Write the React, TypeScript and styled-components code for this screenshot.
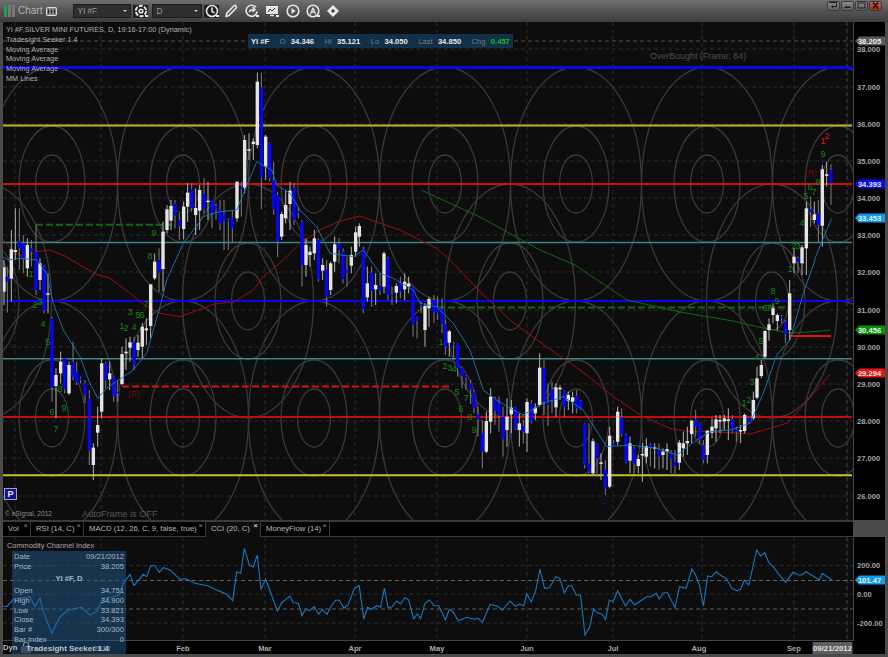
import React from "react";
import styled, { createGlobalStyle } from "styled-components";

const Global = createGlobalStyle`
  html, body { margin: 0; padding: 0; background: #3a3a3a; }
  body { font-family: "Liberation Sans", Arial, sans-serif; overflow: hidden; }
`;

/* ---------- chart data, read off the picture ---------- */
type Candle = { x: number; wt: number; bt: number; bb: number; wb: number; up: boolean };
const table = (ox: number, oy: number, s: string): Candle[] =>
  s.trim().split(/\s*;\s*/).filter(Boolean).map((row) => {
    const [a, b, c, d, e, k] = row.split(/\s+/);
    return {
      x: ox + +a / 3, wt: oy + +b / 3, bt: oy + +c / 3, bb: oy + +d / 3, wb: oy + +e / 3, up: k === "w",
    };
  });

const candles: Candle[] = [
  ...table(0, 180, `12 240 262 335 375 w;22 260 290 305 398 b;34 150 208 296 365 w;46 85 210 216 240 w;58 85 185 205 270 b;
70 165 190 237 280 b;82 175 195 265 290 w;94 180 205 215 260 b;108 135 215 330 345 b;120 235 250 300 330 w;132 255 258 392 400 b;
144 280 340 344 400 w;156 410 415 622 665 b;168 565 585 618 715 w;182 515 545 580 610 w;194 535 535 628 640 b;207 545 555 640 645 w;
219 485 545 590 600 b;230 545 575 608 615 b;242 590 595 600 610 b;255 600 610 645 670 b;268 630 655 812 855 b;280 790 803 855 900 w;
293 680 735 758 800 w;305 535 550 695 715 w;317 545 550 602 625 b;329 545 580 598 630 w;341 590 592 648 665 b;353 600 635 640 665 b;
366 500 522 612 615 w;378 475 515 520 570 w;390 470 487 503 545 w;402 470 487 555 570 b;414 465 488 510 530 w;427 430 440 500 535 w;
439 415 445 451 495 w;452 313 313 438 475 w;464 220 245 295 300 w;477 205 240 278 335 b`),
  ...table(120, 150, `129 215 245 357 425 w;141 165 178 240 250 w;153 150 168 212 240 w;165 150 160 197 235 b;178 190 210 227 270 b;
191 155 170 237 268 w;203 100 128 170 215 w;215 100 118 174 185 b;227 115 174 195 255 w;239 105 120 182 240 w;252 85 132 178 190 b;
264 95 152 156 210 w;276 150 150 190 235 b;288 160 168 178 210 b;300 150 180 220 240 b;312 150 192 212 300 b;325 205 210 215 300 b;
337 180 203 235 280 b;351 95 95 205 215 w;364 95 110 117 200 b`),
  ...table(220, 60, `74 225 240 383 400 w;87 220 268 272 300 w;100 235 245 252 300 w;112 38 65 255 265 w;124 38 82 352 448 b;137 225 230 320 360 w;
149 248 250 355 365 b;161 305 360 448 465 b;173 395 405 545 592 b;185 455 462 530 540 w;197 390 435 475 490 w;210 365 392 432 510 w;
222 370 383 480 495 b;235 440 455 460 475 b;246 480 485 615 680 b;258 535 555 615 650 w;270 560 575 585 620 w;283 510 535 580 600 w;
295 535 540 658 665 b;308 595 615 632 660 w;320 600 628 712 740 b;332 605 610 690 705 w;344 530 553 605 635 w;357 535 552 570 610 b;
369 565 575 657 670 b;381 590 630 638 680 b;394 560 585 617 640 w;407 500 517 575 590 w;418 490 498 530 560 w;430 560 567 748 760 b;
442 620 670 712 725 w;455 620 638 692 740 b;467 640 675 688 735 w;480 640 678 692 705 b;492 575 580 680 700 w;504 590 595 705 720 b;
516 680 705 708 735 b;529 670 678 698 730 w;541 650 670 695 715 b;554 640 665 688 720 w;566 650 670 680 700 w;579 680 682 795 830 b;
591 770 772 782 835 b;603 725 731 735 760 b;615 730 738 810 860 w;627 710 717 745 800 w`),
  ...table(430, 300, `12 -15 0 35 70 b;23 -10 22 40 60 b;36 -5 28 70 100 b;46 60 72 140 165 b;58 90 94 128 170 w;71 125 130 133 180 b;83 130 132 205 230 b;
96 200 203 228 265 b;108 225 227 233 270 b;122 240 250 268 312 b;132 270 275 325 340 b;144 320 343 358 410 b;157 360 400 455 505 b;
169 335 363 455 460 w;182 265 290 365 400 w;195 290 293 332 375 b;207 290 310 347 395 b;219 320 350 418 470 b;231 295 350 390 440 w;
244 300 323 343 400 w;256 320 320 387 390 b;268 340 370 390 440 w;280 360 378 395 430 b;291 295 306 400 455 w;304 300 310 365 370 b;
316 310 323 340 360 w;329 160 203 315 320 w;342 180 205 305 345 b;354 250 303 315 378 b;366 245 268 300 340 b;378 250 262 322 350 w;
390 255 263 268 300 w;403 270 272 320 352 b;415 275 285 302 330 w;428 275 292 305 340 w;440 270 287 325 340 b;452 300 303 328 330 b;
464 370 372 495 505 b;477 370 490 515 520 b;489 415 424 520 525 w;501 430 432 475 530 b;513 460 487 491 540 w;526 480 507 566 585 b;
539 380 407 560 565 w;551 420 430 432 435 b;563 320 335 425 435 w;575 325 352 403 410 b;588 400 403 487 490 b;600 410 430 482 520 w;
612 440 445 490 520 b;625 465 477 498 520 w;637 430 462 465 545 w;649 415 438 470 490 w;661 430 435 443 500 b;674 430 442 446 505 w;
687 430 450 470 510 b;699 445 455 465 505 w;711 430 447 455 510 w;723 450 458 476 520 b;735 450 483 498 525 b;748 420 428 488 510 w;
760 395 430 445 470 w;772 380 423 430 465 w;785 360 362 402 430 w;797 330 357 380 410 b;809 370 372 420 430 b`),
  ...table(700, 260, `10 540 555 600 610 b;22 510 512 585 610 w;36 475 500 518 535 w;48 465 478 505 545 w;60 465 480 482 520 w;73 465 475 484 510 w;
85 445 478 483 540 w;97 465 478 513 520 b;109 500 510 515 545 b;122 495 510 513 550 w;134 460 465 513 520 w;147 470 473 487 490 b;
160 395 420 475 480 w;171 320 355 413 418 w;184 300 315 348 355 w;195 210 213 290 295 w;207 175 193 210 242 w;219 130 145 165 190 w;
232 160 165 183 212 w;245 165 170 173 190 b;256 180 185 222 250 b;269 60 100 210 240 w`),
  ...table(700, 0, `282 745 770 790 820 w;294 770 775 785 820 b;306 735 742 790 825 w;319 605 625 745 825 w;332 590 628 635 680 b;343 605 643 660 670 w;
355 600 640 675 730 b;367 495 508 677 740 w;380 485 523 527 560 w;393 493 510 550 615 b`),
];

const poly = (ox: number, oy: number, s: string, sx = 3) =>
  s.trim().split(/\s+/).map((p) => {
    const [a, b] = p.split(",");
    return `${(ox + +a / sx).toFixed(1)},${(oy + +b / 3).toFixed(1)}`;
  }).join(" ");

const blueMA = [
  poly(0, 180, "8,230 25,240 60,235 110,240 140,280 160,370 190,450 240,530 270,610 293,655 320,625 400,570 440,520 480,380 500,300 550,190 610,110 640,100"),
  poly(220, 60, "0,455 50,450 110,305 155,330 170,375 210,400 240,450 290,500 330,580 400,590 430,570 480,640 520,655 580,690 600,730 650,740"),
  poly(430, 300, "30,30 70,70 120,150 160,270 200,300 240,325 280,345 340,310 400,290 460,330 530,440 600,435 680,445 740,465 800,420 840,395"),
  poly(700, 260, "90,510 150,490 190,400 230,285 270,240 310,100 345,0"),
  poly(700, 0, "345,775 395,655"),
].join(" ");

const redMA = [
  poly(0, 180, "8,178 40,215 70,232 110,215 150,210 195,228 240,255 290,283 330,295 390,340 440,380 480,400 540,410 590,392 640,373"),
  poly(220, 60, "0,730 40,727 100,690 130,650 190,600 240,550 300,510 360,483 420,468 480,490 540,510 600,540 650,565 700,610 780,695"),
  poly(430, 300, "240,60 300,105 400,175 470,225 550,290 640,350 720,385 780,395 860,395"),
  poly(700, 260, "40,515 150,522 260,490 320,425 390,342"),
].join(" ");

const greenMA = "421,190 480,217 540,250 575,265 627,300 680,312 733,321 767,329 790,333 810,332 830,330";

const cci = [
  poly(0, 480, "8,378 20,380 40,358 90,350 105,380 120,355 130,395 155,460 180,410 205,390 245,382 270,405 290,395 310,355 340,350 358,345 370,310 390,283 402,317 430,283 440,290 452,257 465,257 478,277 490,263 510,270 540,298 558,296 585,310 610,315 625,318 650,330 680,343 698,362 710,275 722,280 733,205 748,255 760,260 772,225 783,328 797,297 832,393 845,368 870,348 880,368 895,370"),
  poly(300, 520, "0,265 5,287 15,268 25,272 38,260 50,282 60,268 72,283 85,255 95,241 105,241 117,265 128,255 145,205 158,197 170,297 180,262 190,268 205,257 215,262 225,205 235,263 245,260 258,243 268,252 280,233 290,240 303,296 313,282 322,296 333,250 345,240 358,257 370,257 388,300 398,268 408,275 422,302 445,292 465,298 475,295 487,307 507,253 525,258 540,270 560,243 575,259 585,252 597,257 605,222 617,245 628,215 640,147 652,205 665,203 683,170 693,175 705,218 716,197 725,197 737,225 748,225 760,345 772,322 783,268 795,280 805,282 815,298 825,240 835,245 847,212 868,258 880,238 892,255 905,245 925,230 935,230 950,220 958,237 970,218 980,218 1000,263 1012,200 1030,205 1045,147 1055,165 1065,195 1076,258 1087,168 1098,170 1110,155 1125,168 1137,175 1152,205 1165,212 1175,208 1185,180 1197,195 1218,90 1228,108 1240,98 1250,128 1262,140 1275,160 1295,187 1315,157 1330,165 1338,165 1350,155 1385,180 1393,160 1418,180", 2.667),
].join(" ");

const counts: [string, number, number][] = [
  ["1",31,274],["3",40,302],["2",35,305],["4",43,324],["5",48,342],["8",60,389],["6",52,412],["9",64,408],["7",56,429],
  ["1",122,326],["2",126,328],["3",130,312],["4",134,327],["5",138,315],["6",142,315],["7",146,304],["8",150,256],["9",154,233],
  ["1",441,342],["2",445,366],["3",450,368],["4",454,369],["5",457,392],["7",466,398],["6",461,409],["8",470,417],["9",474,430],
  ["1",744,403],["2",749,400],["3",752,382],["4",757,357],["5",761,341],["6",765,308],["7",769,308],["8",773,291],["9",777,301],
  ["1",790,269],["2",794,246],["3",798,246],["4",802,223],["5",806,196],["6",810,187],["7",814,192],["8",818,182],["9",823,154],
];

const levels: [string, number][] = [
  ["38.000",49],["37.000",87],["36.000",124],["35.000",161],["34.000",198],["33.000",235],["32.000",272],
  ["31.000",310],["30.000",347],["29.000",384],["28.000",421],["27.000",458],["26.000",496],
];
const gridX = [15, 101, 183, 265, 355, 437, 527, 613, 702, 794];

const mainXs = [52, 183, 314, 445, 576, 707, 838];
const offXs = [-14, 248, 510, 772];
const rings: [number, number][] = [[16.5, 29], [33, 58], [65.5, 117]];
const centres: [number, number][] = [
  ...mainXs.flatMap((x) => [[x, 184], [x, 418]] as [number, number][]),
  ...offXs.map((x) => [x, 301] as [number, number]),
];

const badges: [string, number, string][] = [
  ["38.205", 41, "#5a5a5a"], ["34.393", 184, "#0a0af0"], ["33.453", 218, "#0d9cf0"], ["30.456", 330, "#0a8f0a"], ["29.294", 373, "#e81414"],
];

/* ---------- styled parts ---------- */
const Window = styled.div`
  width: 888px; height: 657px; box-sizing: border-box; padding: 0 3px 3px;
  display: flex; flex-direction: column; background: #4a4a4a; overflow: hidden;
  color: #aaa; font-family: "Liberation Sans", Arial, sans-serif;
`;
const TitleBar = styled.div`
  flex: 0 0 22px; margin: 0 -3px; display: flex; align-items: flex-start;
  background: linear-gradient(#707070 0, #565656 45%, #3c3c3c 100%);
`;
const AppIcon = styled.svg`width: 11px; height: 12px; margin: 5px 0 0 4px;`;
const Caption = styled.span`
  font-size: 10px; line-height: 14px; margin: 4px 0 0 3px; color: #b4b4b4;
`;
const CaptionBadge = styled.svg`width: 11px; height: 9px; margin: 7px 16px 0 4px;`;
const FieldBox = styled.div<{ $w: number }>`
  width: ${(p) => p.$w}px; height: 14px; margin-top: 4px; box-sizing: border-box; padding-left: 3px;
  display: flex; align-items: center; justify-content: space-between;
  background: #2e2e2e; border: 1px solid #1d1d1d; color: #999; font-size: 8.2px;
`;
const Caret = styled.i`
  width: 0; height: 0; margin-right: 3px; border: 2.5px solid transparent; border-top-color: #ccc; border-bottom: 0;
`;
const FieldButton = styled.div`
  width: 17px; height: 15px; margin: 3.5px 3px 0 1px; display: flex; align-items: center; justify-content: center;
  background: #1e1e1e; border: 1px solid #555; box-sizing: border-box; border-radius: 2px;
`;
const Tools = styled.div`display: flex; gap: 4.4px; margin-top: 3px;`;
const ToolIcon = styled.svg`width: 16px; height: 16px; display: block; flex: none;`;
const WindowButtons = styled.div`display: flex; gap: 1px; margin: 1px 6px 0 auto;`;
const WindowButton = styled.div<{ $close?: boolean }>`
  width: 13px; height: 9.5px; box-sizing: border-box; display: flex; align-items: center; justify-content: center;
  border-radius: 2px; border: 1px solid #3a3a3a;
  background: ${(p) => (p.$close ? "linear-gradient(#c8604a,#96321e)" : "linear-gradient(#8a8a8a,#5e5e5e)")};
`;
const MainPane = styled.div`position: relative; flex: 0 0 498px; background: #000;`;
const PaneSvg = styled.svg`display: block; width: 882px; font-family: "Liberation Sans", Arial, sans-serif;`;
const Legend = styled.div`
  position: absolute; left: 3px; top: 3px; font-size: 7.3px; line-height: 9.8px; color: #b0b0b0;
`;
const QuoteStrip = styled.div`
  position: absolute; left: 245px; top: 12px; width: 265px; height: 14px; box-sizing: border-box; padding-left: 3px;
  display: flex; align-items: center; gap: 5.4px; background: #12304a; font-size: 7.6px; color: #6f7f8c; white-space: nowrap;
`;
const QuoteValue = styled.b<{ $up?: boolean }>`
  color: ${(p) => (p.$up ? "#10c010" : "#e8e8e8")}; margin-right: 5px; font-weight: 700;
`;
const Note = styled.div<{ $x: number; $y: number; $size: number; $color: string }>`
  position: absolute; left: ${(p) => p.$x}px; top: ${(p) => p.$y}px; font-size: ${(p) => p.$size}px; line-height: 12px;
  color: ${(p) => p.$color}; white-space: nowrap;
`;
const PButton = styled.div`
  position: absolute; left: 1px; top: 466px; width: 13px; height: 12px; display: flex; align-items: center; justify-content: center;
  background: #11118a; border: 1px solid #9aa0d8; box-sizing: border-box; color: #e8e8ff; font: 700 9px "Liberation Sans", sans-serif;
`;
const TabBar = styled.div`
  flex: 0 0 17px; box-sizing: border-box; display: flex; background: #000; margin-right: 32px;
  border-top: 2px solid #3a3a3a; border-bottom: 1px solid #3a3a3a;
`;
const Tab = styled.div<{ $w: number; $active?: boolean }>`
  position: relative; width: ${(p) => p.$w}px; box-sizing: border-box; padding: 1px 0 0 5px;
  font-size: 7.7px; line-height: 12px; color: #b8b8b8; white-space: nowrap;
  border-right: 1px solid #3a3a3a;
  background: ${(p) => (p.$active ? "#0d0d0d" : "#000")};
  margin-bottom: ${(p) => (p.$active ? "-1px" : "0")};
`;
const TabClose = styled.span<{ $active?: boolean }>`
  position: absolute; right: 2px; top: -1px; font-size: 8px; line-height: 10px;
  color: ${(p) => (p.$active ? "#fff" : "#888")};
`;
const LowerPane = styled.div`position: relative; flex: 1 1 auto; background: #000; overflow: hidden;`;
const PaneTitle = styled.div`
  position: absolute; left: 4px; top: 3px; font-size: 7.4px; line-height: 12px; color: #a8a8a8;
`;
const DataWindow = styled.div`
  position: absolute; left: 9px; top: 14px; width: 114px; height: 103px; box-sizing: border-box; padding: 1px 2px 0 2px;
  background: rgba(34, 92, 146, 0.5); font-size: 7.6px; color: #a9b6c2;
`;
const DataRow = styled.div`display: flex; justify-content: space-between; height: 9.9px; line-height: 10px;`;
const DataTitle = styled.div`text-align: center; font-weight: 700; height: 12.5px; line-height: 12.5px; margin: 1.5px 0 0;`;
const Footer = styled.div`
  position: absolute; left: 0; bottom: 0; height: 14px; display: flex; align-items: center;
  font-size: 7.6px; font-weight: 700; color: #bdbdbd;
`;
const Lock = styled.svg`width: 12px; height: 12px; margin: 0 -6px 0 3px;`;
const FooterName = styled.span`font-size: 8px; color: #c4c4c4; margin-top: 3px;`;

/* ---------- icons ---------- */
const ICON = { fill: "none", stroke: "#e6e6e6", strokeWidth: 1.6, strokeLinecap: "round" as const, strokeLinejoin: "round" as const };
const Dot = () => <rect x="12" y="12" width="3" height="2" fill="#e6e6e6" />;
const TimerIcon = () => (
  <ToolIcon viewBox="0 0 16 16"><g {...ICON}><circle cx="8" cy="8" r="5.5" /><path d="M8 5v3.5l2 1" /></g><Dot /></ToolIcon>
);
const GearIcon = () => (
  <ToolIcon viewBox="0 0 16 16">
    <g {...ICON}><circle cx="8" cy="8" r="5.2" strokeDasharray="4 1.4" strokeWidth="2" strokeLinecap="butt" /><circle cx="8" cy="8" r="1.8" /></g><Dot />
  </ToolIcon>
);

/* ---------- drawing ---------- */
const CandleMark = ({ c }: { c: Candle }) => (
  <g>
    <line x1={c.x} x2={c.x} y1={c.wt} y2={c.wb} stroke={c.up ? "#b4b4b4" : "#7e7e7e"} strokeWidth="1" />
    <rect x={c.x - 1.7} y={c.bt} width="3.4" height={Math.max(c.bb - c.bt, 1.5)} fill={c.up ? "#e4e4e4" : "#0606ee"} />
  </g>
);

const PriceBadge = ({ label, y, fill }: { label: string; y: number; fill: string }) => (
  <g>
    <path d={`M855 ${y} l4 -4.5 h26 v9 h-26 z`} fill={fill} />
    <text x="869.5" y={y + 2.8} fontSize="7.6" fontWeight="700" textAnchor="middle" fill="#ececec">{label}</text>
  </g>
);

const MainChart = () => (
  <PaneSvg viewBox="3 22 882 498" height="498">
    <defs><clipPath id="plot"><rect x="3" y="22" width="850" height="498" /></clipPath></defs>
    <rect x="3" y="22" width="850" height="498" fill="#0d0d0d" />
    <g clipPath="url(#plot)">
      {levels.map(([l, y]) => <line key={l} x1="3" x2="853" y1={y} y2={y} stroke="#2b2b2b" strokeDasharray="4 3" />)}
      {gridX.map((x) => <line key={x} x1={x} x2={x} y1="22" y2="520" stroke="#2b2b2b" strokeDasharray="4 3" />)}
      <line x1="847" x2="847" y1="22" y2="520" stroke="#454545" strokeDasharray="4 3" />
      {centres.map(([x, y]) => rings.map(([rx, ry]) => (
        <ellipse key={`${x}-${y}-${rx}`} cx={x} cy={y} rx={rx} ry={ry} fill="none" stroke="#3a3a3a" strokeWidth="1.3" />
      )))}
      <line x1="3" x2="853" y1="41" y2="41" stroke="#505050" strokeDasharray="4 3" />
      <line x1="3" x2="852" y1="67.5" y2="67.5" stroke="#0707ee" strokeWidth="3" />
      <line x1="3" x2="852" y1="125.5" y2="125.5" stroke="#b9b927" strokeWidth="2" />
      <line x1="3" x2="852" y1="184" y2="184" stroke="#d00c0c" strokeWidth="2" />
      <line x1="3" x2="852" y1="242.5" y2="242.5" stroke="#3f8484" strokeWidth="1.5" />
      <line x1="3" x2="852" y1="301" y2="301" stroke="#0707ee" strokeWidth="2" />
      <line x1="3" x2="852" y1="358.7" y2="358.7" stroke="#3f8484" strokeWidth="1.5" />
      <line x1="3" x2="852" y1="417" y2="417" stroke="#c40c0c" strokeWidth="2" />
      <line x1="3" x2="852" y1="475.2" y2="475.2" stroke="#c4c422" strokeWidth="2" />
      <line x1="36" x2="172" y1="224.8" y2="224.8" stroke="#0e6a0e" strokeWidth="2" strokeDasharray="7 3" />
      <line x1="438" x2="788" y1="307.5" y2="307.5" stroke="#0e6a0e" strokeWidth="2" strokeDasharray="7 3" />
      <line x1="122" x2="450" y1="386.5" y2="386.5" stroke="#d81010" strokeWidth="2" strokeDasharray="7 3" />
      <line x1="790" x2="831" y1="336" y2="336" stroke="#e01010" strokeWidth="2" />
      <polyline points={greenMA} fill="none" stroke="#0e6a0e" strokeWidth="1" />
      <polyline points={redMA} fill="none" stroke="#961010" strokeWidth="1" />
      {candles.map((c, i) => <CandleMark key={i} c={c} />)}
      <polyline points={blueMA} fill="none" stroke="#1878b8" strokeWidth="0.9" />
      {counts.map(([t, x, y], i) => (
        <text key={i} x={x} y={y + 3.2} fontSize="9" textAnchor="middle" fill="#0b8a0b">{t}</text>
      ))}
      <text x="823" y="144" fontSize="9" textAnchor="middle" fill="#e81414">1</text>
      <text x="827" y="139" fontSize="9" textAnchor="middle" fill="#e81414">2</text>
      <text x="811" y="176" fontSize="8.5" textAnchor="middle" fill="#6e0c0c">(R)</text>
      <text x="134" y="397" fontSize="8.5" textAnchor="middle" fill="#6e0c0c">(R)</text>
      <text x="822" y="163" fontSize="8.5" textAnchor="middle" fill="#12126e">L</text>
      <text x="604" y="504" fontSize="8.5" textAnchor="middle" fill="#12126e">L</text>
    </g>
    <line x1="853.5" x2="853.5" y1="22" y2="520" stroke="#444" />
    {levels.map(([l, y]) => (
      <text key={l} x="857" y={y + 2.8} fontSize="7.6" fontWeight="700" fill="#a4a4a4">{l}</text>
    ))}
    {badges.map(([l, y, f]) => <PriceBadge key={l} label={l} y={y} fill={f} />)}
  </PaneSvg>
);

const months: [string, number][] = [["2012",102],["Feb",183],["Mar",265],["Apr",355],["May",437],["Jun",527],["Jul",613],["Aug",699],["Sep",794]];

const LowerChart = () => (
  <PaneSvg viewBox="3 537 882 117" height="117">
    <rect x="3" y="537" width="850" height="103.5" fill="#0d0d0d" />
    {gridX.map((x) => <line key={x} x1={x} x2={x} y1="537" y2="640" stroke="#2b2b2b" strokeDasharray="4 3" />)}
    <line x1="847" x2="847" y1="537" y2="640" stroke="#454545" strokeDasharray="4 3" />
    {[565.5, 594, 623].map((y) => <line key={y} x1="3" x2="853" y1={y} y2={y} stroke="#2b2b2b" strokeDasharray="4 3" />)}
    {[580.5, 609].map((y) => <line key={y} x1="3" x2="853" y1={y} y2={y} stroke="#5e5e5e" strokeDasharray="4 3" />)}
    <polyline points={cci} fill="none" stroke="#1878bc" strokeWidth="1.1" />
    <line x1="3" x2="853" y1="640.5" y2="640.5" stroke="#444" />
    <line x1="853.5" x2="853.5" y1="537" y2="641" stroke="#444" />
    {[["200.00",565],["0.00",594],["-200.00",623]].map(([l, y]) => (
      <text key={l} x="857" y={+y + 2.8} fontSize="7.6" fontWeight="700" fill="#a4a4a4">{l}</text>
    ))}
    <path d="M855 580 l4 -4.5 h26 v9 h-26 z" fill="#0d9cf0" />
    <text x="869.5" y="582.8" fontSize="7.6" fontWeight="700" textAnchor="middle" fill="#f0f0f0">101.47</text>
    {months.map(([m, x]) => (
      <text key={m} x={x} y="651" fontSize="7.6" fontWeight="700" textAnchor="middle" fill="#aaaaaa">{m}</text>
    ))}
    <rect x="812.5" y="642" width="40" height="12" fill="#5e5e5e" />
    <text x="832.5" y="651" fontSize="7.8" fontWeight="700" textAnchor="middle" fill="#e4e4e4">09/21/2012</text>
  </PaneSvg>
);

const dataRows: [string, string][] = [
  ["Open","34.751"],["High","34.900"],["Low","33.821"],["Close","34.393"],["Bar #","300/300"],["Bar Index","0"],
];

export default function App() {
  return (
    <Window>
      <Global />
      <TitleBar>
        <AppIcon viewBox="0 0 11 12">
          <rect x="0" y="0" width="3" height="12" fill="#1aa050" />
          <rect x="4" y="0" width="3" height="12" fill="#777" />
          <rect x="8" y="0" width="3" height="12" fill="#777" />
        </AppIcon>
        <Caption>Chart</Caption>
        <CaptionBadge viewBox="0 0 11 9">
          <rect x=".5" y=".5" width="10" height="8" rx="1" fill="#888" stroke="#ddd" />
          <path d="M2.5 2.5v4M5.5 2.5v4M8.5 2.5v4" stroke="#222" strokeWidth="1.2" />
        </CaptionBadge>
        <FieldBox $w={58}>YI #F<Caret /></FieldBox>
        <FieldButton><GearIcon /></FieldButton>
        <FieldBox $w={50}>D<Caret /></FieldBox>
        <FieldButton><TimerIcon /></FieldButton>
        <Tools>
          <ToolIcon viewBox="0 0 16 16"><path {...ICON} d="M3 13.5l.8-3.4L10.8 3a1.5 1.5 0 0 1 2.2 2.2l-7 7.2z" /></ToolIcon>
          <ToolIcon viewBox="0 0 16 16"><g {...ICON}><path d="M13 9a5.5 5.5 0 1 1-1.4-5" /><path d="M5.5 8.5c1-2 3-2 5-2M9 4.5l2 2-2 2" /></g><Dot /></ToolIcon>
          <ToolIcon viewBox="0 0 16 16">
            <rect x="2" y="3" width="12" height="8" fill="#e6e6e6" />
            <path d="M4 9l2-3 2 2 3-3" fill="none" stroke="#333" />
            <path d="M6 12.5h4" stroke="#e6e6e6" strokeWidth="1.4" /><Dot />
          </ToolIcon>
          <ToolIcon viewBox="0 0 16 16"><circle cx="8" cy="8" r="5.8" {...ICON} /><path d="M6.5 5l4.2 3-4.2 3z" fill="#e6e6e6" /></ToolIcon>
          <ToolIcon viewBox="0 0 16 16"><circle cx="8" cy="8" r="5.8" {...ICON} /><path {...ICON} strokeWidth="1.3" d="M5.5 11L8 5l2.5 6M6.3 9h3.4" /><Dot /></ToolIcon>
          <ToolIcon viewBox="0 0 16 16"><path d="M8 2l6 6-6 6-6-6z" fill="#e6e6e6" /><path d="M6 8l2-2 2 2-2 2z" fill="#333" /></ToolIcon>
        </Tools>
        <WindowButtons>
          <WindowButton>
            <svg width="9" height="7" viewBox="0 0 9 7"><path d="M.5.5h7v4h-4" fill="none" stroke="#1c1c1c" /><path d="M4 6.5l-2-2 2-1" fill="#1c1c1c" /></svg>
          </WindowButton>
          <WindowButton><svg width="9" height="7" viewBox="0 0 9 7"><rect x="1.5" y="4.5" width="6" height="1.5" fill="#1c1c1c" /></svg></WindowButton>
          <WindowButton><svg width="9" height="7" viewBox="0 0 9 7"><rect x="1" y="1" width="7" height="5" fill="none" stroke="#1c1c1c" /></svg></WindowButton>
          <WindowButton $close><svg width="9" height="7" viewBox="0 0 9 7"><path d="M2 .5l5 6M7 .5l-5 6" stroke="#2a0a04" strokeWidth="1.6" /></svg></WindowButton>
        </WindowButtons>
      </TitleBar>

      <MainPane>
        <MainChart />
        <Legend>
          <div>YI #F,SILVER MINI FUTURES, D, 19:16-17:00 (Dynamic)</div>
          <div>Tradesight Seeker 1.4</div>
          <div>Moving Average</div>
          <div>Moving Average</div>
          <div>Moving Average</div>
          <div>MM Lines</div>
        </Legend>
        <QuoteStrip>
          <QuoteValue>YI #F</QuoteValue>O <QuoteValue>34.346</QuoteValue>Hi <QuoteValue>35.121</QuoteValue>
          Lo <QuoteValue>34.050</QuoteValue>Last <QuoteValue>34.850</QuoteValue>Chg <QuoteValue $up>0.457</QuoteValue>
        </QuoteStrip>
        <Note $x={647} $y={28} $size={8.9} $color="#4f4f4f">OverBought (Frame: 64)</Note>
        <PButton>P</PButton>
        <Note $x={2} $y={486} $size={6.6} $color="#8c8c8c">© eSignal, 2012</Note>
        <Note $x={79} $y={486} $size={9.2} $color="#565656">AutoFrame is OFF</Note>
      </MainPane>

      <TabBar>
        <Tab $w={28}>Vol<TabClose>×</TabClose></Tab>
        <Tab $w={53}>RSI (14, C)<TabClose>×</TabClose></Tab>
        <Tab $w={122}>MACD (12, 26, C, 9, false, true)<TabClose>×</TabClose></Tab>
        <Tab $w={55} $active>CCI (20, C)<TabClose $active>×</TabClose></Tab>
        <Tab $w={69}>MoneyFlow (14)<TabClose>×</TabClose></Tab>
      </TabBar>

      <LowerPane>
        <LowerChart />
        <PaneTitle>Commodity Channel Index</PaneTitle>
        <DataWindow>
          <DataRow><span>Date</span><span>09/21/2012</span></DataRow>
          <DataRow><span>Price</span><span>38.205</span></DataRow>
          <DataTitle>YI #F, D</DataTitle>
          {dataRows.map(([k, v]) => <DataRow key={k}><span>{k}</span><span>{v}</span></DataRow>)}
        </DataWindow>
        <Footer>
          Dyn
          <Lock viewBox="0 0 12 12">
            <rect x="1" y="5" width="10" height="7" fill="#557" opacity=".7" />
            <path d="M3.5 5V3.5a2.5 2.5 0 0 1 5 0V5" fill="none" stroke="#889" strokeWidth="1.2" />
          </Lock>
          <FooterName>Tradesight Seeker 1.4</FooterName>
        </Footer>
      </LowerPane>
    </Window>
  );
}
